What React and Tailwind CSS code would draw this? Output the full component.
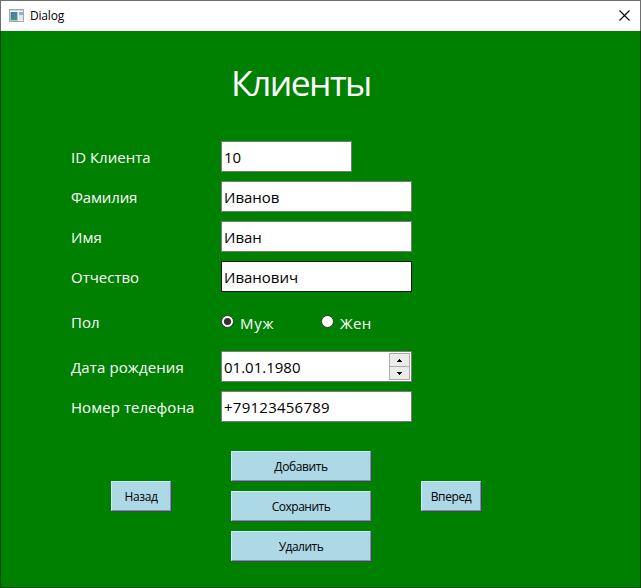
import React from "react";

const LABEL = "w-[150px] shrink-0 whitespace-nowrap text-[15px] leading-[32px] text-white";
const FIELD = "flex h-[31px] items-center border bg-white whitespace-nowrap text-[15px] leading-[27px] text-black";
const BUTTON =
  "flex h-[30px] items-center justify-center border border-t-[#d2ffff] border-l-[#d2ffff] border-r-[#788f9c] border-b-[#788f9c] bg-[#add8e6] pt-[2px] text-[12px] leading-[16px] whitespace-nowrap text-black shadow-[1px_1px_0_#3f4a55]";

function Row({ label, labelClass = "", children }) {
  return (
    <div className="flex h-[31px]">
      <div className={`${LABEL} ${labelClass}`}>{label}</div>
      {children}
    </div>
  );
}

function AppIcon() {
  return (
    <svg width="16" height="14" viewBox="0 0 16 14" shapeRendering="crispEdges">
      <defs>
        <linearGradient id="pane" x1="0" y1="0" x2="1" y2="1">
          <stop offset="0" stopColor="#3f74ad" />
          <stop offset="1" stopColor="#46a274" />
        </linearGradient>
      </defs>
      <rect x="0.5" y="0.5" width="14" height="12" fill="#f4f5f6" stroke="#a5a9ae" />
      <rect x="1" y="1" width="13" height="1" fill="#d3d6d9" />
      <rect x="1" y="3" width="8" height="9" fill="#b4c4cc" />
      <rect x="2" y="3" width="6" height="8" fill="url(#pane)" />
      <rect x="10" y="3" width="4" height="3" fill="#8db4d4" />
      <rect x="10" y="6" width="4" height="5" fill="#dfe7e8" />
    </svg>
  );
}

function Radio({ checked }) {
  return (
    <svg width="13" height="13" viewBox="0 0 13 13">
      <circle cx="6.5" cy="6.5" r="6" fill="#fff" stroke="#333" strokeWidth="1" />
      {checked && <circle cx="6.5" cy="6.5" r="3.6" fill="#333" />}
    </svg>
  );
}

function Arrow({ down }) {
  return (
    <svg width="5" height="3" viewBox="0 0 5 3" shapeRendering="crispEdges">
      <path d={down ? "M0 0h5v1H0zM1 1h3v1H1zM2 2h1v1H2z" : "M2 0h1v1H2zM1 1h3v1H1zM0 2h5v1H0z"} fill="#000" />
    </svg>
  );
}

export default function App() {
  return (
    <div className="flex h-[588px] w-[641px] flex-col overflow-hidden bg-[#008000] font-['Open_Sans','Noto_Sans',sans-serif]">
      <header className="flex h-[31px] shrink-0 items-center border-x border-t border-[#707070] bg-white pr-[10px] pb-px pl-[8px]">
        <AppIcon />
        <span className="ml-[5px] pt-px text-[12px] leading-[16px] tracking-[-0.2px] text-black">Dialog</span>
        <svg className="ml-auto" width="11" height="11" viewBox="0 0 11 11">
          <path d="M0.5 0.5l10 10M10.5 0.5l-10 10" stroke="#000" strokeWidth="1.1" fill="none" />
        </svg>
      </header>

      <main className="flex grow flex-col border-x border-b border-[#0c4a0c] pl-[70px]">
        <h1 className="mt-[30px] ml-[160px] h-[44px] text-[35.5px] leading-[42px] font-normal tracking-[-1.6px] whitespace-nowrap text-white">
          Клиенты
        </h1>

        <div className="mt-[36px] flex flex-col gap-[9px]">
          <Row label="ID Клиента">
            <div className={`${FIELD} w-[131px] border-[#7a7a7a] pt-px pl-[2px]`}>10</div>
          </Row>
          <Row label="Фамилия" labelClass="tracking-[-0.15px]">
            <div className={`${FIELD} w-[191px] border-[#7a7a7a] pt-px pl-[2px]`}>Иванов</div>
          </Row>
          <Row label="Имя">
            <div className={`${FIELD} w-[191px] border-[#7a7a7a] pt-px pl-[2px]`}>Иван</div>
          </Row>
          <Row label="Отчество">
            <div className={`${FIELD} w-[191px] border-[#171717] pt-px pl-[2px]`}>Иванович</div>
          </Row>
        </div>

        <div className="mt-[14px] flex h-[31px]">
          <div className={LABEL}>Пол</div>
          <div className="flex w-[100px] gap-[6px] pt-[9px]">
            <Radio checked />
            <span className="text-[15px] leading-[17px] tracking-[0.7px] text-white">Муж</span>
          </div>
          <div className="flex gap-[6px] pt-[9px]">
            <Radio />
            <span className="text-[15px] leading-[17px] tracking-[0.3px] text-white">Жен</span>
          </div>
        </div>

        <div className="mt-[14px] flex flex-col gap-[9px]">
          <Row label="Дата рождения" labelClass="tracking-[0.1px]">
            <div className={`${FIELD} w-[191px] justify-between border-[#7a7a7a] pr-px pl-[2px]`}>
              <span className="pt-px">01.01.1980</span>
              <div className="flex h-[27px] w-[21px] flex-col border border-[#acacac] bg-[#ebebeb]">
                <div className="flex h-[13px] items-center justify-center border-b border-[#acacac]">
                  <Arrow />
                </div>
                <div className="flex h-[12px] items-center justify-center">
                  <Arrow down />
                </div>
              </div>
            </div>
          </Row>
          <Row label="Номер телефона" labelClass="tracking-[0.05px]">
            <div className={`${FIELD} w-[191px] border-[#7a7a7a] pt-px pl-[2px] tracking-[0.25px]`}>+79123456789</div>
          </Row>
        </div>

        <div className="mt-[29px] ml-[40px] flex">
          <div className={`${BUTTON} mt-[30px] mr-[60px] w-[60px] tracking-[-0.4px]`}>Назад</div>
          <div className="flex w-[140px] flex-col gap-[10px]">
            <div className={`${BUTTON} tracking-[-0.4px]`}>Добавить</div>
            <div className={`${BUTTON} tracking-[-0.5px]`}>Сохранить</div>
            <div className={`${BUTTON} tracking-[-0.5px]`}>Удалить</div>
          </div>
          <div className={`${BUTTON} mt-[30px] ml-[50px] w-[60px] tracking-[-0.4px]`}>Вперед</div>
        </div>
      </main>
    </div>
  );
}
